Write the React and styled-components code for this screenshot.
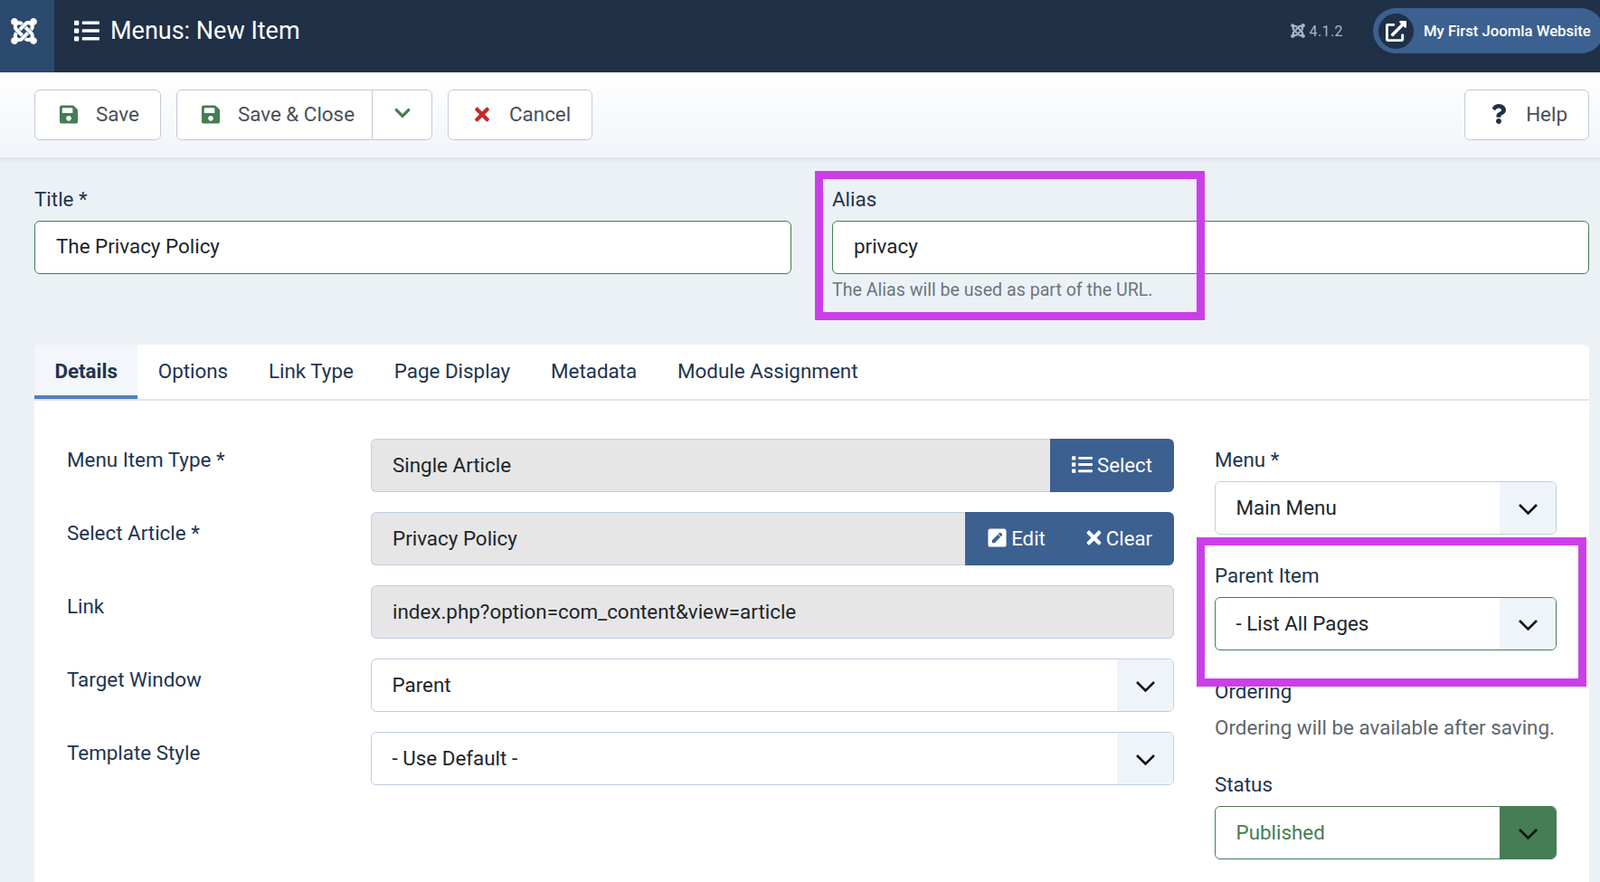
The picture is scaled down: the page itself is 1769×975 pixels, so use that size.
import React from 'react'
import styled, { createGlobalStyle } from 'styled-components'
import {
  FaJoomla, FaList, FaSave, FaChevronDown, FaTimes, FaQuestion,
  FaExternalLinkAlt, FaPenSquare
} from 'react-icons/fa'

const Global = createGlobalStyle`
  html, body { margin: 0; padding: 0; height: 100%; overflow: hidden; }
  body { font-family: Roboto, "Liberation Sans", sans-serif; background: #ecf1f6; color: #22344f; }
  * { box-sizing: border-box; }
`

const Page = styled.div`
  position: relative;
  width: 1769px;
  height: 975px;
  overflow: hidden;
  display: flex;
  flex-direction: column;
`

const Header = styled.header`
  flex: none;
  height: 80px;
  background: #1f3047;
  display: flex;
  color: #fff;
`

const LogoBox = styled.div`
  width: 60px;
  height: 100%;
  padding: 0 7px 12px 0;
  background: #2c4a6e;
  display: flex;
  align-items: center;
  justify-content: center;
  font-size: 33px;
`

const HeaderBar = styled.div`
  flex: 1;
  min-width: 0;
  padding-bottom: 12px;
  display: flex;
  align-items: center;
`

const PageTitle = styled.h1`
  flex: 1;
  margin: 0 0 0 22px;
  display: flex;
  align-items: center;
  gap: 12px;
  font-size: 27px;
  font-weight: 400;
  svg { font-size: 28px; }
`

const Version = styled.div`
  display: flex;
  align-items: center;
  gap: 4px;
  margin-right: 33px;
  color: #a9b4c4;
  font-size: 16px;
  letter-spacing: 0.4px;
  svg { font-size: 18px; }
`

const SitePill = styled.div`
  width: 255px;
  height: 50px;
  margin-right: -4px;
  border-radius: 25px;
  background: #3c6090;
  display: flex;
  align-items: center;
  padding-left: 6px;
  gap: 11px;
  font-size: 16.7px;
  font-weight: 500;
  white-space: nowrap;
`

const SiteCircle = styled.span`
  width: 39px;
  height: 39px;
  border-radius: 50%;
  background: #1f3047;
  display: flex;
  align-items: center;
  justify-content: center;
  font-size: 23px;
`

const Toolbar = styled.div`
  flex: none;
  height: 94px;
  padding: 19px 12px 0 38px;
  display: flex;
  align-items: flex-start;
  gap: 17px;
  background: linear-gradient(#fff, #f1f4f9);
  box-shadow: 0 2px 5px rgba(60, 90, 130, 0.12);
`

const ToolButton = styled.button`
  height: 56px;
  padding: 0 ${p => p.$right || 23}px 2px 26px;
  margin-left: ${p => (p.$push ? 'auto' : 0)};
  display: flex;
  align-items: center;
  gap: 19px;
  background: #fff;
  border: 1px solid #c3cad9;
  border-radius: 6px;
  color: #495057;
  font: 400 22.4px Roboto, sans-serif;
`

const SplitGroup = styled.div`
  display: flex;
  height: 56px;
  background: #fff;
  border: 1px solid #c3cad9;
  border-radius: 6px;
`

const SplitMain = styled(ToolButton)`
  height: 54px;
  border: 0;
  border-right: 1px solid #c3cad9;
  border-radius: 0;
  background: none;
`

const SplitCaret = styled.span`
  width: 65px;
  padding-bottom: 4px;
  display: flex;
  align-items: center;
  justify-content: center;
  color: #457d54;
  font-size: 20px;
`

const ToolIcon = styled.span`
  width: 22px;
  display: flex;
  justify-content: center;
  font-size: ${p => p.$size || 23}px;
  color: ${p => p.$color};
`

const Main = styled.main`
  flex: 1;
  padding: 33px 12px 0 38px;
  display: flex;
  flex-direction: column;
  min-height: 0;
`

const TitleGrid = styled.div`
  display: grid;
  grid-template-columns: 1fr 1fr;
  gap: 45px;
  height: 174px;
  flex: none;
`

const Label = styled.label`
  display: block;
  height: 26px;
  margin-bottom: 11px;
  font-size: 22.4px;
  line-height: 26px;
`

const TextInput = styled.input`
  display: block;
  width: 100%;
  height: 59px;
  padding: 0 22px 3px 23px;
  background: #fff;
  border: 1px solid ${p => (p.$valid ? '#457d54' : '#bfcde3')};
  border-radius: 6px;
  color: #212529;
  font: 400 22.4px Roboto, sans-serif;
  outline: none;
`

const Help = styled.div`
  margin-top: 6px;
  font-size: 19.6px;
  line-height: 24px;
  color: #6d757e;
`

const Card = styled.section`
  flex: 1;
  background: #fff;
  border-radius: 6px 6px 0 0;
  display: flex;
  flex-direction: column;
`

const Tabs = styled.nav`
  flex: none;
  height: 62px;
  display: flex;
  border-bottom: 2px solid #dfe4ef;
`

const Tab = styled.a`
  height: 60px;
  padding: 2px 22.4px 0;
  display: flex;
  align-items: center;
  font-size: 22.4px;
  font-weight: ${p => (p.$active ? 700 : 400)};
  background: ${p => (p.$active ? '#f3f6fa' : 'transparent')};
  border-bottom: 4px solid ${p => (p.$active ? '#5080c0' : 'transparent')};
  border-radius: 6px 0 0 0;
`

const Body = styled.div`
  padding: 42px 36px 0 36px;
  display: grid;
  grid-template-columns: 1224px 378px;
  gap: 45px;
`

const Row = styled.div`
  display: grid;
  grid-template-columns: 336px 1fr;
  height: 59px;
  margin-bottom: 22px;
`

const RowLabel = styled.label`
  padding-top: 10px;
  font-size: 22.4px;
  line-height: 26px;
`

const Joined = styled.div`
  display: flex;
  height: 59px;
`

const ReadOnly = styled(TextInput)`
  flex: 1;
  min-width: 0;
  padding-bottom: 2px;
  background: #e6e6e6;
  border-radius: ${p => (p.$joined ? '6px 0 0 6px' : '6px')};
  border-right-width: ${p => (p.$joined ? 0 : 1)}px;
`

const BlueActions = styled.div`
  display: flex;
  align-items: center;
  gap: 42px;
  padding: 0 24px 2px 24px;
  background: #3c6090;
  border-radius: 0 6px 6px 0;
`

const BlueAction = styled.span`
  display: flex;
  align-items: center;
  gap: ${p => p.$gap}px;
  color: #fff;
  font-size: 22.2px;
  svg { font-size: 23px; }
`

const SelectBox = styled.div`
  display: flex;
  height: 59px;
  border: 1px solid ${p => (p.$valid ? '#457d54' : '#bfcde3')};
  border-radius: 6px;
  overflow: hidden;
  background: #fff;
`

const SelectValue = styled.div`
  flex: 1;
  padding: 0 22px 2px 22.5px;
  display: flex;
  align-items: center;
  font-size: 22.4px;
  color: ${p => (p.$valid ? '#457d54' : '#212529')};
`

const SelectArrow = styled.div`
  width: 62px;
  padding-top: 2px;
  display: flex;
  align-items: center;
  justify-content: center;
  background: ${p => (p.$filled ? '#457d54' : '#eff4fb')};
`

const Side = styled.div`
  padding-top: 10px;
`

const SideGroup = styled.div`
  margin-bottom: 32px;
`

const Note = styled.div`
  margin-top: 14px;
  padding-bottom: 5px;
  font-size: 22.4px;
  line-height: 26px;
  color: #5c6670;
`

const Highlight = styled.div`
  position: absolute;
  top: ${p => p.$top}px;
  left: ${p => p.$left}px;
  width: 431px;
  height: ${p => p.$h}px;
  border: 9px solid #cc3fe8;
  pointer-events: none;
`

function Chevron() {
  return (
    <svg width="23" height="14" viewBox="0 0 23 14">
      <polyline points="2,2 11.5,11.5 21,2" fill="none" stroke="#111" strokeWidth="2.6" />
    </svg>
  )
}

function Select({ value, valid, filled }) {
  return (
    <SelectBox $valid={valid}>
      <SelectValue $valid={filled}>{value}</SelectValue>
      <SelectArrow $filled={filled}><Chevron /></SelectArrow>
    </SelectBox>
  )
}

const tabs = ['Details', 'Options', 'Link Type', 'Page Display', 'Metadata', 'Module Assignment']

export default function App() {
  return (
    <Page>
      <Global />
      <Header>
        <LogoBox><FaJoomla /></LogoBox>
        <HeaderBar>
          <PageTitle><FaList />Menus: New Item</PageTitle>
          <Version><FaJoomla />4.1.2</Version>
          <SitePill>
            <SiteCircle><FaExternalLinkAlt /></SiteCircle>
            My First Joomla Website
          </SitePill>
        </HeaderBar>
      </Header>

      <Toolbar>
        <ToolButton>
          <ToolIcon $color="#457d54"><FaSave /></ToolIcon>Save
        </ToolButton>
        <SplitGroup>
          <SplitMain $right={19}>
            <ToolIcon $color="#457d54"><FaSave /></ToolIcon>Save &amp; Close
          </SplitMain>
          <SplitCaret><FaChevronDown /></SplitCaret>
        </SplitGroup>
        <ToolButton>
          <ToolIcon $color="#c52827"><FaTimes /></ToolIcon>Cancel
        </ToolButton>
        <ToolButton $push>
          <ToolIcon $color="#1f3047" $size={22}><FaQuestion /></ToolIcon>Help
        </ToolButton>
      </Toolbar>

      <Main>
        <TitleGrid>
          <div>
            <Label>Title *</Label>
            <TextInput $valid readOnly value="The Privacy Policy" />
          </div>
          <div>
            <Label>Alias</Label>
            <TextInput $valid readOnly value="privacy" />
            <Help>The Alias will be used as part of the URL.</Help>
          </div>
        </TitleGrid>

        <Card>
          <Tabs>
            {tabs.map((t, i) => <Tab key={t} $active={i === 0}>{t}</Tab>)}
          </Tabs>
          <Body>
            <div>
              <Row>
                <RowLabel>Menu Item Type *</RowLabel>
                <Joined>
                  <ReadOnly $joined readOnly value="Single Article" />
                  <BlueActions>
                    <BlueAction $gap={5}><FaList />Select</BlueAction>
                  </BlueActions>
                </Joined>
              </Row>
              <Row>
                <RowLabel>Select Article *</RowLabel>
                <Joined>
                  <ReadOnly $joined readOnly value="Privacy Policy" />
                  <BlueActions>
                    <BlueAction $gap={4}><FaPenSquare />Edit</BlueAction>
                    <BlueAction $gap={2}><FaTimes />Clear</BlueAction>
                  </BlueActions>
                </Joined>
              </Row>
              <Row>
                <RowLabel>Link</RowLabel>
                <ReadOnly readOnly value="index.php?option=com_content&view=article" />
              </Row>
              <Row>
                <RowLabel>Target Window</RowLabel>
                <Select value="Parent" />
              </Row>
              <Row>
                <RowLabel>Template Style</RowLabel>
                <Select value="- Use Default -" />
              </Row>
            </div>
            <Side>
              <SideGroup>
                <Label>Menu *</Label>
                <Select value="Main Menu" />
              </SideGroup>
              <SideGroup>
                <Label>Parent Item</Label>
                <Select value="- List All Pages" valid />
              </SideGroup>
              <SideGroup>
                <Label>Ordering</Label>
                <Note>Ordering will be available after saving.</Note>
              </SideGroup>
              <div>
                <Label>Status</Label>
                <Select value="Published" valid filled />
              </div>
            </Side>
          </Body>
        </Card>
      </Main>

      <Highlight $top={189} $left={901} $h={165} />
      <Highlight $top={594} $left={1323} $h={165} />
    </Page>
  )
}
